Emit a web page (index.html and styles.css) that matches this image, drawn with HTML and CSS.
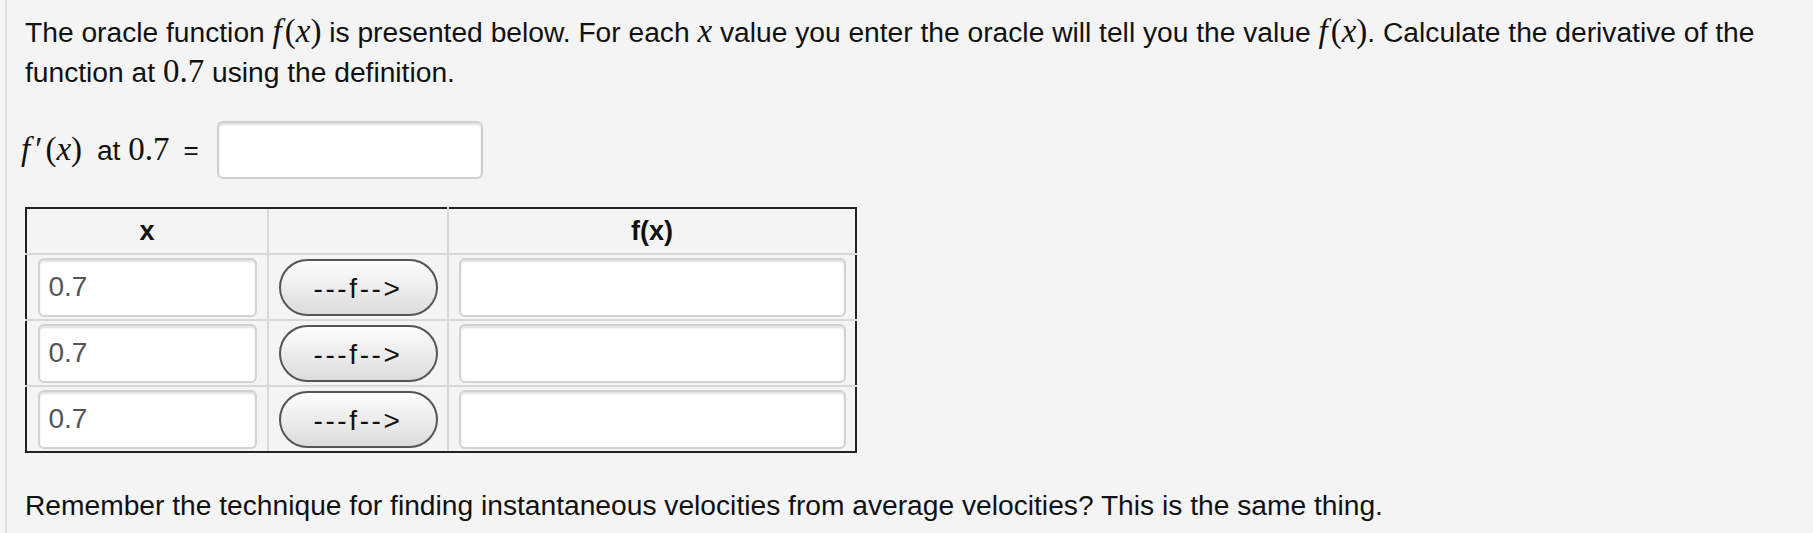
FILE: index.html
```html
<!DOCTYPE html>
<html>
<head>
<meta charset="utf-8">
<link rel="stylesheet" href="styles.css">
</head>
<body>
<div class="page">
  <p class="intro">The oracle function <span class="m"><i class="fi">f</i>(<i>x</i>)</span> is presented below. For each <span class="m"><i>x</i></span> value you enter the oracle will tell you the value <span class="m"><i class="fi">f</i>(<i>x</i>)</span>. Calculate the derivative of the function at <span class="m">0.7</span> using the definition.</p>
  <div class="answer">
    <span class="label"><span class="m fx"><i class="fi">f</i><span class="prime">′</span>(<i>x</i>)</span> at <span class="m">0.7</span></span>
    <span class="eq">=</span>
    <span class="box"></span>
  </div>
  <table class="oracle">
    <tr class="head">
      <th class="c1">x</th>
      <th class="c2"></th>
      <th class="c3">f(x)</th>
    </tr>
    <tr>
      <td class="c1"><span class="field">0.7</span></td>
      <td class="c2"><span class="btn">---f--&gt;</span></td>
      <td class="c3"><span class="field wide"></span></td>
    </tr>
    <tr>
      <td class="c1"><span class="field">0.7</span></td>
      <td class="c2"><span class="btn">---f--&gt;</span></td>
      <td class="c3"><span class="field wide"></span></td>
    </tr>
    <tr>
      <td class="c1"><span class="field">0.7</span></td>
      <td class="c2"><span class="btn">---f--&gt;</span></td>
      <td class="c3"><span class="field wide"></span></td>
    </tr>
  </table>
  <p class="note">Remember the technique for finding instantaneous velocities from average velocities? This is the same thing.</p>
</div>
</body>
</html>
```

FILE: styles.css
```css
html, body {
  margin: 0;
  padding: 0;
  background: #f4f4f4;
}
body {
  font-family: "Liberation Sans", Arial, Helvetica, sans-serif;
  color: #111;
  font-size: 28.2px;
}
.page {
  margin-left: 5px;
  border-left: 2px solid #dedede;
  padding-left: 18px;
  height: 533px;
  box-sizing: border-box;
  padding-top: 12px;
}
.intro {
  margin: 0;
  line-height: 40px;
  width: 1768px;
}
.m {
  font-family: "Liberation Serif", "Times New Roman", serif;
  font-size: 33px;
  line-height: 1;
}
.fi {
  margin-right: 3px;
}
.prime {
  margin: 0 3px 0 2px;
}
.fx {
  margin-right: 7px;
}
.answer {
  display: flex;
  align-items: center;
  margin-top: 29px;
  height: 58px;
}
.label {
  margin-left: -4px;
}
.eq {
  margin-left: 14px;
  font-size: 26px;
}
.box {
  margin-left: 18px;
  width: 266px;
  height: 58px;
  box-sizing: border-box;
  background: #fff;
  border: 2px solid #cfcfcf;
  border-radius: 6px;
  box-shadow: inset 0 2px 2px rgba(0,0,0,0.12);
}
.oracle {
  margin-top: 28px;
  border-collapse: collapse;
  border: 2px solid #222;
}
.oracle th, .oracle td {
  border: 2px solid #d8d8d8;
  padding: 0;
  text-align: center;
}
.oracle th {
  height: 44px;
  font-size: 27px;
  font-weight: bold;
}
.oracle td {
  height: 64px;
}
.oracle .c1 { width: 240px; border-right: 1px solid #333; }
.oracle .c2 { width: 178px; }
.oracle .c3 { width: 406px; }
.oracle tr:last-child td { border-bottom: 2px solid #222; }
.oracle tr > :first-child { border-left: 2px solid #222; }
.oracle tr > :last-child { border-right: 2px solid #222; }
.oracle tr.head > * { border-top: 2px solid #222; }
.field {
  display: flex;
  align-items: center;
  margin: 0 auto;
  width: 219px;
  height: 59px;
  box-sizing: border-box;
  background: #fff;
  border: 2px solid #d2d2d2;
  border-radius: 6px;
  box-shadow: inset 0 2px 2px rgba(0,0,0,0.12);
  padding-left: 9px;
  color: #555;
  font-size: 28px;
}
.field.wide {
  width: 387px;
}
.btn {
  display: flex;
  align-items: center;
  justify-content: center;
  margin: 0 auto;
  width: 159px;
  height: 57px;
  box-sizing: border-box;
  border: 2px solid #555;
  border-radius: 29px;
  background: linear-gradient(#fdfdfd, #dcdcdc);
  color: #111;
  font-size: 28px;
  letter-spacing: 2.6px;
  padding-top: 4px;
}
.note {
  margin: 32px 0 0;
  line-height: 40px;
}
```
